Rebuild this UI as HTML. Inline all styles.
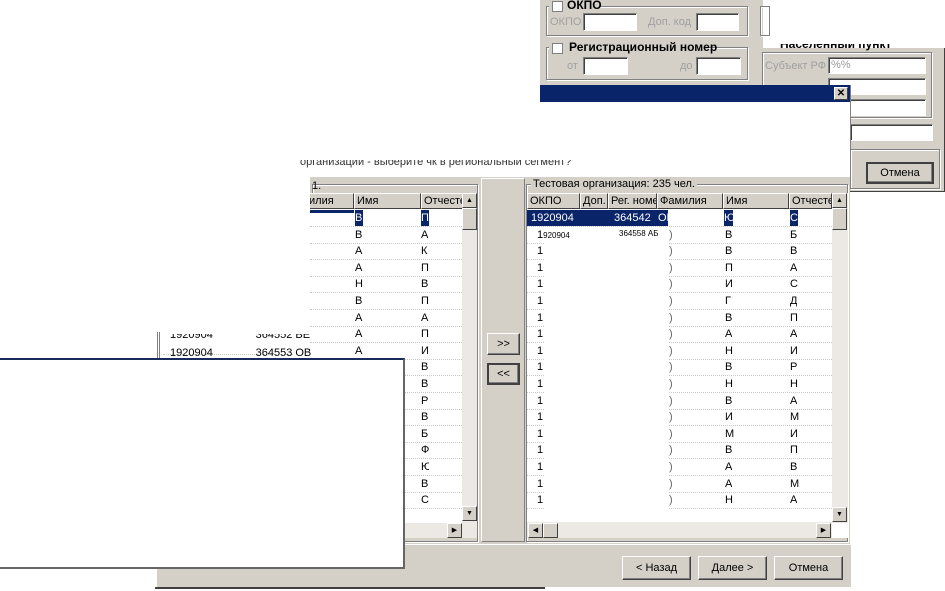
<!DOCTYPE html>
<html><head><meta charset="utf-8">
<style>
*{box-sizing:border-box;margin:0;padding:0}
body{width:945px;height:591px;background:#fff;position:relative;overflow:hidden;font-family:"Liberation Sans",sans-serif;font-size:11px;color:#000}
.a{position:absolute}
.g{background:#d4d0c8}
.inp{position:absolute;background:#fff;border:1px solid #808080;border-right-color:#fff;border-bottom-color:#fff;box-shadow:inset 1px 1px 0 #404040}
.btn{position:absolute;background:#d4d0c8;border:1px solid;border-color:#fff #404040 #404040 #fff;box-shadow:inset -1px -1px 0 #808080;text-align:center;font-size:11px}
.grp{position:absolute;border:1px solid #808080;box-shadow:1px 1px 0 #fff, inset 1px 1px 0 #fff}
.hd{position:absolute;top:0;height:16px;background:#d4d0c8;border:1px solid;border-color:#fff #404040 #404040 #fff;padding:1px 2px;white-space:nowrap;overflow:hidden;font-size:11px}
.row{position:absolute;left:0;right:0;height:17px;border-bottom:1px dotted #c8c8c8}
.c{position:absolute;top:2px;white-space:nowrap;overflow:hidden}
.gl{color:#a0a0a0}
.sb{position:absolute;background:#ece9e4}
.arr{position:absolute;width:15px;height:15px;background:#d4d0c8;border:1px solid;border-color:#fff #404040 #404040 #fff;font-size:7px;text-align:center;line-height:13px}
</style></head><body>

<!-- top-right window -->
<div class="a g" style="left:540px;top:0;width:222px;height:192px"></div>
<div class="a g" style="left:757px;top:0;width:6px;height:50px"></div>
<div class="a g" style="left:757px;top:48px;width:188px;height:144px;border-right:1px solid #404040;border-bottom:1px solid #404040"></div>
<div class="grp" style="left:546px;top:6px;width:202px;height:30px"></div>
<div class="a g" style="left:549px;top:0;width:50px;height:12px"></div>
<div class="a" style="left:552px;top:1px;width:11px;height:11px;background:#fff;border:1px solid #808080"></div>
<div class="a" style="left:567px;top:-2px;font-weight:bold;font-size:12px">ОКПО</div>
<div class="a gl" style="left:550px;top:16px">ОКПО</div>
<div class="inp" style="left:583px;top:13px;width:54px;height:18px"></div>
<div class="a gl" style="left:648px;top:16px">Доп. код</div>
<div class="inp" style="left:696px;top:13px;width:43px;height:18px"></div>
<div class="grp" style="left:760px;top:6px;width:10px;height:30px"></div>
<div class="grp" style="left:546px;top:47px;width:202px;height:33px"></div>
<div class="a g" style="left:549px;top:40px;width:160px;height:14px"></div>
<div class="a" style="left:552px;top:43px;width:11px;height:11px;background:#fff;border:1px solid #808080"></div>
<div class="a" style="left:569px;top:40px;font-weight:bold;font-size:12px">Регистрационный номер</div>
<div class="a gl" style="left:567px;top:60px">от</div>
<div class="inp" style="left:583px;top:57px;width:45px;height:18px"></div>
<div class="a gl" style="left:680px;top:60px">до</div>
<div class="inp" style="left:696px;top:57px;width:45px;height:18px"></div>
<div class="grp" style="left:762px;top:52px;width:170px;height:66px"></div>
<div class="a" style="left:780px;top:44px;font-weight:bold;font-size:12px;height:7px;overflow:hidden;line-height:1px">Населенный пункт</div>
<div class="a gl" style="left:765px;top:60px">Субъект РФ</div>
<div class="inp" style="left:828px;top:57px;width:98px;height:17px;padding:1px 2px;color:#999">%%</div>
<div class="inp" style="left:828px;top:78px;width:98px;height:17px"></div>
<div class="inp" style="left:828px;top:99px;width:98px;height:17px"></div>
<div class="inp" style="left:850px;top:124px;width:83px;height:17px"></div>
<div class="grp" style="left:850px;top:149px;width:90px;height:40px"></div>
<div class="btn" style="left:866px;top:162px;width:68px;height:22px;border:2px solid #404040;line-height:18px">Отмена</div>

<!-- dialog -->
<div class="a" style="left:540px;top:85px;width:311px;height:93px;background:#fff;border-right:1px solid #808080"></div>
<div class="a" style="left:540px;top:85px;width:310px;height:17px;background:#0a246a"></div>
<div class="a" style="left:834px;top:87px;width:14px;height:13px;background:#d4d0c8;border:1px solid;border-color:#fff #404040 #404040 #fff;font-size:10px;font-weight:bold;text-align:center;line-height:11px">✕</div>
<div class="a" style="left:300px;top:160px;width:275px;height:8px;overflow:hidden"><div style="margin-top:-4px;white-space:nowrap;color:#333">организации - выберите чк в региональный сегмент?</div></div>

<!-- main wizard -->
<div class="a g" style="left:310px;top:177px;width:540px;height:370px"></div>
<div class="grp" style="left:312px;top:184px;width:166px;height:358px"></div>
<div class="a" style="left:312px;top:180px">1.</div>
<!-- left list -->
<div class="a" style="left:310px;top:193px;width:167px;height:345px;background:#fff;overflow:hidden">
 <div class="hd" style="left:-4px;width:48px">илия</div>
 <div class="hd" style="left:44px;width:67px">Имя</div>
 <div class="hd" style="left:111px;width:42px">Отчесте</div>
 <div class="a" style="left:0;top:17px;width:44px;height:3px;background:#0a246a"></div>
 <div id="L" class="a" style="left:0;top:17px;width:152px;height:320px"></div>
 <div class="sb" style="left:152px;top:0;width:15px;height:345px"></div>
 <div class="arr" style="left:152px;top:0">▲</div>
 <div class="arr" style="left:152px;top:15px;height:22px"></div>
 <div class="arr" style="left:152px;top:313px">▼</div>
 <div class="sb" style="left:0;top:330px;width:152px;height:15px"></div>
 <div class="arr" style="left:137px;top:330px">▶</div>
</div>
<!-- middle -->
<div class="a" style="left:481px;top:178px;width:44px;height:364px;border:1px solid;border-color:#fff #808080 #808080 #fff"></div>
<div class="btn" style="left:487px;top:333px;width:33px;height:22px;line-height:20px">&gt;&gt;</div>
<div class="btn" style="left:487px;top:363px;width:33px;height:22px;line-height:18px;border:2px solid #404040">&lt;&lt;</div>
<!-- right list -->
<div class="grp" style="left:526px;top:184px;width:322px;height:358px"></div>
<div class="a g" style="left:531px;top:178px;padding:0 2px">Тестовая организация: 235 чел.</div>
<div class="a" style="left:527px;top:193px;width:321px;height:345px;background:#fff;overflow:hidden">
 <div class="hd" style="left:0;width:53px">ОКПО</div>
 <div class="hd" style="left:53px;width:28px">Доп.</div>
 <div class="hd" style="left:81px;width:49px">Рег. номе</div>
 <div class="hd" style="left:130px;width:66px">Фамилия</div>
 <div class="hd" style="left:196px;width:66px">Имя</div>
 <div class="hd" style="left:262px;width:43px">Отчесте</div>
 <div id="R" class="a" style="left:0;top:17px;width:305px;height:320px"></div>
 <div class="a" style="left:18px;top:47px;width:123px;height:270px;background:#fff"></div>
 <div class="sb" style="left:305px;top:0;width:16px;height:330px"></div>
 <div class="arr" style="left:305px;top:0">▲</div>
 <div class="arr" style="left:305px;top:15px;height:22px"></div>
 <div class="arr" style="left:305px;top:314px">▼</div>
 <div class="sb" style="left:0;top:329px;width:305px;height:16px"></div>
 <div class="arr" style="left:1px;top:330px">◀</div>
 <div class="arr" style="left:16px;top:330px"></div>
 <div class="arr" style="left:289px;top:330px">▶</div>
</div>

<!-- left fragment list -->
<div class="a" style="left:157px;top:332px;width:3px;height:28px;border-left:1px solid #808080;border-right:1px solid #808080"></div>
<div class="a" style="left:163px;top:338px;width:130px;height:17px;border-bottom:1px dotted #ccc"></div>
<div class="a" style="left:170px;top:334px;height:8px;overflow:hidden;width:140px"><div style="margin-top:-5px;white-space:nowrap">1920904&nbsp;&nbsp;&nbsp;&nbsp;&nbsp;&nbsp;&nbsp;&nbsp;&nbsp;&nbsp;&nbsp;&nbsp;&nbsp;&nbsp;364552 ВЕР</div></div>
<div class="a" style="left:170px;top:347px;white-space:nowrap">1920904&nbsp;&nbsp;&nbsp;&nbsp;&nbsp;&nbsp;&nbsp;&nbsp;&nbsp;&nbsp;&nbsp;&nbsp;&nbsp;&nbsp;364553 ОВ</div>

<!-- bottom strip -->
<div class="a g" style="left:155px;top:545px;width:696px;height:42px;border-left:2px solid #fff"></div>
<div class="a" style="left:155px;top:544px;width:696px;height:1px;background:#fff"></div>
<div class="a" style="left:155px;top:587px;width:390px;height:2px;background:#404040"></div>
<div class="btn" style="left:622px;top:556px;width:69px;height:24px;line-height:22px">&lt; Назад</div>
<div class="btn" style="left:698px;top:556px;width:69px;height:24px;line-height:22px">Далее &gt;</div>
<div class="btn" style="left:774px;top:556px;width:69px;height:24px;line-height:22px">Отмена</div>

<!-- left white window -->
<div class="a" style="left:0;top:358px;width:405px;height:211px;background:#fff;border-top:2px solid #1a2a5a;border-right:2px solid #666;border-bottom:2px solid #666"></div>

<script>
var lo=["П","А","К","П","В","П","А","П","И","В","В","Р","В","Б","Ф","Ю","В","С"];
var li=["В","В.","А","А","Н","В.","А","А","А"];
var h="";
for(var i=0;i<18;i++){var y=i*16.6,s=i==0;
h+='<div class="row" style="top:'+y+'px">'+
(li[i]?'<div class="c" style="left:45px;'+(s?'background:#0a246a;color:#fff;top:0;height:16px;padding-top:2px;':'')+'width:8px">'+li[i]+'</div>':'')+
'<div class="c" style="left:111px;width:8px;'+(s?'background:#0a246a;color:#fff;top:0;height:16px;padding-top:2px;':'')+'">'+lo[i]+'</div></div>';}
document.getElementById("L").innerHTML=h;
var ri=["Ю","В","В","П","И","Г","В","А","Н","В","Н","В","И","М","В","А","А","Н"];
var ro=["С","Б","В","А","С","Д","П","А","И","Р","Н","А","М","И","П","В","М","А"];
h="";
for(var i=0;i<18;i++){var y=i*16.6;
if(i==0){h+='<div class="row" style="top:0;"><div class="a" style="left:0;top:0;width:141px;height:16px;background:#0a246a"></div><div class="c" style="left:4px;color:#fff">1920904</div><div class="c" style="left:87px;color:#fff">364542</div><div class="c" style="left:131px;color:#fff">ОК</div><div class="c" style="left:197px;width:9px;height:16px;top:0;padding-top:2px;background:#0a246a;color:#fff">Ю</div><div class="c" style="left:263px;width:8px;height:16px;top:0;padding-top:2px;background:#0a246a;color:#fff">С</div></div>';continue;}
h+='<div class="row" style="top:'+y+'px"><div class="c" style="left:10px">'+(i==1?'1<span style="font-size:8px">920904</span>':'1')+'</div>'+(i==1?'<div class="c" style="left:92px;font-size:8px">364558 АБ</div>':'')+'<div class="c" style="left:142px;color:#666">)</div><div class="c" style="left:198px">'+ri[i]+'</div><div class="c" style="left:263px">'+ro[i]+'</div></div>';}
document.getElementById("R").innerHTML=h;
</script>
</body></html>
